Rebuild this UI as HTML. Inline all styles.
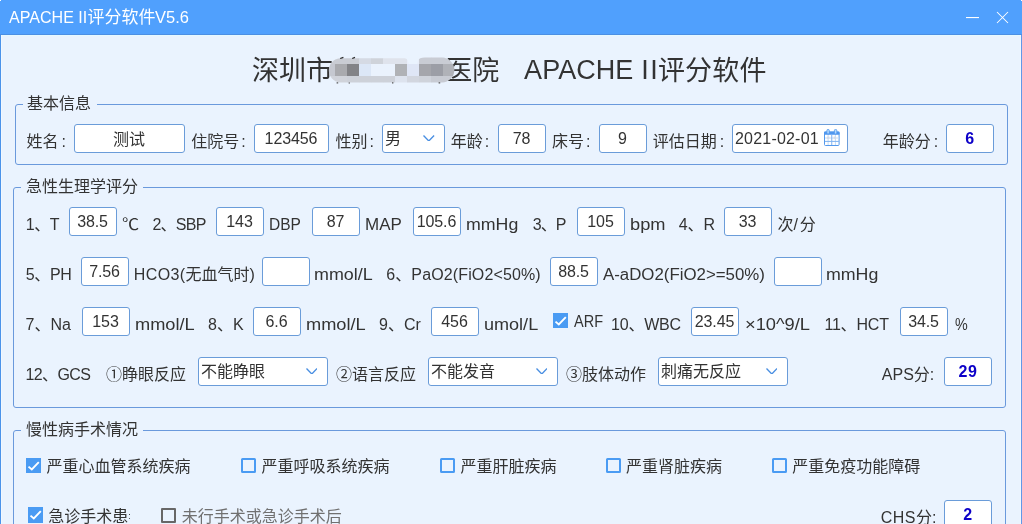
<!DOCTYPE html>
<html lang="zh-CN"><head><meta charset="utf-8"><title>APACHE II评分软件V5.6</title>
<style>
*{box-sizing:border-box;margin:0;padding:0}
html,body{width:1022px;height:524px;overflow:hidden;background:#eaf3fe}
body{font-family:"Liberation Sans","Noto Sans CJK SC",sans-serif;font-size:16px;color:#333;position:relative}
#win{will-change:transform;position:absolute;left:0;top:0;width:1022px;height:524px;overflow:hidden;background:#eaf3fe}
.bl{position:absolute;top:35px;width:1px;height:489px}
#tb{position:absolute;left:0;top:0;width:1022px;height:35px;background:#50a0fd;border-bottom:1px solid #4c8fe3}
#tb .t{position:absolute;top:7px;line-height:22px;color:#fff;font-size:17px;white-space:pre}
.abs{position:absolute}
.gb{position:absolute;border:1px solid #6a99dc;border-radius:3px}
.lg{position:absolute;line-height:22px;height:22px;background:#eaf3fe;white-space:nowrap;padding:0 5px}
.lb{position:absolute;line-height:22px;height:22px;white-space:pre}
.in{position:absolute;height:29px;border:1px solid #6a9cd9;border-radius:3px;background:#fff;text-align:center;line-height:28px;letter-spacing:-0.1px;padding-right:1px;white-space:pre;overflow:hidden}
.in.sc{color:#0c00c8;font-weight:bold;letter-spacing:0.5px;padding-right:0}
.sel{position:absolute;height:29px;border:1px solid #6a9cd9;border-radius:3px;background:#fff;line-height:27px;padding-left:2px;white-space:pre;overflow:hidden}
.chev{position:absolute;top:9.5px;width:11.6px;height:6.8px}
.cb{position:absolute;width:15.4px;height:15.4px}
.cb.on{background:#4a9bf3}
.cb.off{border:2px solid #4a9bf3;background:#eaf3fe;width:15px;height:15px;border-radius:1.5px}
.cb.dis{border:2px solid #676767;background:#eaf3fe;width:15px;height:15px;border-radius:1px}
.ttl{position:absolute;font-size:27px;line-height:36px;white-space:pre;color:#333}
</style></head><body><div id="win">
<div id="tb"><div class="t" id="tb1" style="left:9.20px;transform-origin:0 0;transform:scaleX(0.9450)">APACHE II</div><div class="t" id="tb2" style="left:87.50px">评分软件</div><div class="t" id="tb3" style="left:155.00px;transform-origin:0 0;transform:scaleX(0.9700)">V5.6</div><svg class="abs" style="left:966px;top:16px" width="14" height="3" viewBox="0 0 14 3"><rect x="0" y="1" width="13" height="1.1" fill="#fff"/></svg><svg class="abs" style="left:996px;top:11px" width="14" height="14" viewBox="0 0 14 14"><path d="M1 1 L12 12 M12 1 L1 12" stroke="#fff" stroke-width="1.05" fill="none"/></svg><div class="abs" style="left:0;top:0;width:2px;height:2px;background:radial-gradient(circle at 2px 2px,transparent 1.6px,#fff 2px)"></div><div class="abs" style="right:0;top:0;width:2px;height:2px;background:radial-gradient(circle at 0 2px,transparent 1.6px,#fff 2px)"></div></div>
<div class="ttl" id="t1" style="left:252px;top:53px">深圳市</div><div class="ttl" id="t2" style="left:445.3px;top:53px">医院</div><div class="ttl" id="t3" style="left:524.1px;top:53px"><span style="position:relative;top:-1.2px"><span style="letter-spacing:0.05px">APACHE</span><span style="letter-spacing:0.3px"> </span><span style="letter-spacing:1.6px">I</span>I</span><span style="letter-spacing:0.2px">评分软件</span></div>
<svg class="abs" style="left:327px;top:56px" width="130" height="30" viewBox="327 56 130 30">
<defs><clipPath id="cp"><path d="M339.8 58.3 H405 Q407 58.3 408 61 L409 64 H417 L418 60.5 Q419 57.6 425 57.6 H442 A12.4 12.4 0 0 1 442 82.4 H339.8 A12.1 12.1 0 0 1 339.8 58.3 Z"/></clipPath></defs>
<g clip-path="url(#cp)">
<rect x="323" y="52" width="12.2" height="12.2" fill="#c9ccd3"/><rect x="335" y="52" width="12.2" height="12.2" fill="#c9ccd3"/><rect x="347" y="52" width="12.2" height="12.2" fill="#c9ccd3"/><rect x="359" y="52" width="12.2" height="12.2" fill="#d5dae4"/><rect x="371" y="52" width="12.2" height="12.2" fill="#cfd3da"/><rect x="383" y="52" width="12.2" height="12.2" fill="#dfe3ec"/><rect x="395" y="52" width="12.2" height="12.2" fill="#dfe3ec"/><rect x="407" y="52" width="12.2" height="12.2" fill="#e8eefa"/><rect x="419" y="52" width="12.2" height="12.2" fill="#c9ccd4"/><rect x="431" y="52" width="12.2" height="12.2" fill="#c9ccd4"/><rect x="443" y="52" width="12.2" height="12.2" fill="#c9ccd4"/><rect x="323" y="64" width="12.2" height="12.2" fill="#c5c8d0"/><rect x="335" y="64" width="12.2" height="12.2" fill="#a9aaae"/><rect x="347" y="64" width="12.2" height="12.2" fill="#828387"/><rect x="359" y="64" width="12.2" height="12.2" fill="#dce7f7"/><rect x="371" y="64" width="12.2" height="12.2" fill="#eaf2fd"/><rect x="383" y="64" width="12.2" height="12.2" fill="#eaf2fd"/><rect x="395" y="64" width="12.2" height="12.2" fill="#b0b2b6"/><rect x="407" y="64" width="12.2" height="12.2" fill="#dfe6f6"/><rect x="419" y="64" width="12.2" height="12.2" fill="#a5a6ac"/><rect x="431" y="64" width="12.2" height="12.2" fill="#9c9ea6"/><rect x="443" y="64" width="12.2" height="12.2" fill="#b0b2b8"/><rect x="323" y="76" width="12.2" height="12.2" fill="#d0d3da"/><rect x="335" y="76" width="12.2" height="12.2" fill="#d0d3da"/><rect x="347" y="76" width="12.2" height="12.2" fill="#cdd1d9"/><rect x="359" y="76" width="12.2" height="12.2" fill="#cdd1d9"/><rect x="371" y="76" width="12.2" height="12.2" fill="#cdd1d9"/><rect x="383" y="76" width="12.2" height="12.2" fill="#cdd1d9"/><rect x="395" y="76" width="12.2" height="12.2" fill="#dde3ee"/><rect x="407" y="76" width="12.2" height="12.2" fill="#d2d6df"/><rect x="419" y="76" width="12.2" height="12.2" fill="#cfd3db"/><rect x="431" y="76" width="12.2" height="12.2" fill="#c8cbd3"/><rect x="443" y="76" width="12.2" height="12.2" fill="#c8cbd3"/></g><path d="M340.2 58.5 L343.4 57.3 M352.2 58.5 L355 57.3" stroke="#2a2a2a" stroke-width="1.3" fill="none"/><path d="M336.6 82.9 h1.6 M348.6 83 h1.4 M392 82.9 h1.4 M438.6 82.9 h1.6" stroke="#555" stroke-width="1.1" fill="none"/></svg>
<div class="gb" style="left:15px;top:104px;width:993px;height:61px"></div><div class="gb" style="left:13px;top:187px;width:993px;height:221px"></div><div class="gb" style="left:13px;top:430px;width:993px;height:120px"></div>
<div class="lg" id="lg1" style="left:23px;top:93px;padding:0 6px 0 4px">基本信息</div><div class="lg" id="lg2" style="left:21px;top:176px">急性生理学评分</div><div class="lg" id="lg3" style="left:21px;top:419px">慢性病手术情况</div>
<div class="lb" id="lb0" style="left:26.50px;top:130.5px"><span class="c">姓名</span><span class="l" style="letter-spacing:0.00px;margin-left:3.0px">:</span></div><div class="lb" id="lb1" style="left:191.20px;top:130.5px"><span class="c">住院号</span><span class="l" style="letter-spacing:0.00px;margin-left:2.0px">:</span></div><div class="lb" id="lb2" style="left:335.40px;top:130.5px"><span class="c">性别</span><span class="l" style="letter-spacing:0.00px;margin-left:2.0px">:</span></div><div class="lb" id="lb3" style="left:450.70px;top:130.5px"><span class="c">年龄</span><span class="l" style="letter-spacing:0.00px;margin-left:2.0px">:</span></div><div class="lb" id="lb4" style="left:552.00px;top:130.5px"><span class="c">床号</span><span class="l" style="letter-spacing:0.00px;margin-left:2.0px">:</span></div><div class="lb" id="lb5" style="left:652.70px;top:130.5px"><span class="c">评估日期</span><span class="l" style="letter-spacing:0.00px;margin-left:3.0px">:</span></div><div class="lb" id="lb6" style="left:882.80px;top:130.5px"><span class="c">年龄分</span><span class="l" style="letter-spacing:0.00px;margin-left:3.0px">:</span></div><div class="lb" id="lb7" style="left:25.80px;top:213.5px"><span class="l" style="letter-spacing:-0.50px">1</span><span class="c" style="letter-spacing:-0.50px">、</span><span class="l" style="letter-spacing:-0.50px">T</span></div><div class="lb" id="lb8" style="left:121.80px;top:213.5px;transform-origin:0 0;transform:scaleX(1.0714)">℃</div><div class="lb" id="lb9" style="left:152.40px;top:213.5px"><span class="l" style="letter-spacing:-0.75px">2</span><span class="c" style="letter-spacing:-0.75px">、</span><span class="l" style="letter-spacing:-0.75px">SBP</span></div><div class="lb" id="lb10" style="left:269.20px;top:213.5px;transform-origin:0 0;transform:scaleX(0.9702)">DBP</div><div class="lb" id="lb11" style="left:365.20px;top:213.5px;transform-origin:0 0;transform:scaleX(1.0614)">MAP</div><div class="lb" id="lb12" style="left:466.20px;top:213.5px;transform-origin:0 0;transform:scaleX(1.1093)">mmHg</div><div class="lb" id="lb13" style="left:532.80px;top:213.5px"><span class="l" style="letter-spacing:-1.00px">3</span><span class="c" style="letter-spacing:-1.00px">、</span><span class="l" style="letter-spacing:-1.00px">P</span></div><div class="lb" id="lb14" style="left:630.00px;top:213.5px;transform-origin:0 0;transform:scaleX(1.1390)">bpm</div><div class="lb" id="lb15" style="left:678.70px;top:213.5px"><span class="l" style="letter-spacing:-0.00px">4</span><span class="c">、</span><span class="l" style="letter-spacing:-0.00px">R</span></div><div class="lb" id="lb16" style="left:777.40px;top:213.5px"><span class="c">次</span><span class="l" style="letter-spacing:2.00px">/</span><span class="c">分</span></div><div class="lb" id="lb17" style="left:25.80px;top:263.5px"><span class="l" style="letter-spacing:-0.35px">5</span><span class="c" style="letter-spacing:-0.35px">、</span><span class="l" style="letter-spacing:-0.35px">PH</span></div><div class="lb" id="lb18" style="left:133.80px;top:263.5px"><span class="l" style="letter-spacing:0.40px">HCO3(</span><span class="c">无血气时</span><span class="l" style="letter-spacing:0.40px">)</span></div><div class="lb" id="lb19" style="left:314.30px;top:263.5px;transform-origin:0 0;transform:scaleX(1.1180)">mmol/L</div><div class="lb" id="lb20" style="left:386.20px;top:263.5px"><span class="l" style="letter-spacing:0.13px">6</span><span class="c" style="letter-spacing:0.13px">、</span><span class="l" style="letter-spacing:0.13px">PaO2(FiO2&lt;50%)</span></div><div class="lb" id="lb21" style="left:603.00px;top:263.5px;transform-origin:0 0;transform:scaleX(1.0523)">A-aDO2(FiO2&gt;=50%)</div><div class="lb" id="lb22" style="left:826.10px;top:263.5px;transform-origin:0 0;transform:scaleX(1.1113)">mmHg</div><div class="lb" id="lb23" style="left:25.50px;top:313.5px"><span class="l" style="letter-spacing:-0.02px">7</span><span class="c" style="letter-spacing:-0.02px">、</span><span class="l" style="letter-spacing:-0.02px">Na</span></div><div class="lb" id="lb24" style="left:135.10px;top:313.5px;transform-origin:0 0;transform:scaleX(1.1377)">mmol/L</div><div class="lb" id="lb25" style="left:208.00px;top:313.5px"><span class="l" style="letter-spacing:-0.00px">8</span><span class="c">、</span><span class="l" style="letter-spacing:-0.00px">K</span></div><div class="lb" id="lb26" style="left:306.20px;top:313.5px;transform-origin:0 0;transform:scaleX(1.1377)">mmol/L</div><div class="lb" id="lb27" style="left:379.10px;top:313.5px"><span class="l" style="letter-spacing:0.01px">9</span><span class="c" style="letter-spacing:0.01px">、</span><span class="l" style="letter-spacing:0.01px">Cr</span></div><div class="lb" id="lb28" style="left:484.20px;top:313.5px;transform-origin:0 0;transform:scaleX(1.1280)">umol/L</div><div class="lb" id="lb29" style="left:611.00px;top:313.5px"><span class="l" style="letter-spacing:-0.20px">10</span><span class="c" style="letter-spacing:-0.20px">、</span><span class="l" style="letter-spacing:-0.20px">WBC</span></div><div class="lb" id="lb30" style="left:745.10px;top:313.5px;transform-origin:0 0;transform:scaleX(1.1429)">×10^9/L</div><div class="lb" id="lb31" style="left:824.40px;top:313.5px"><span class="l" style="letter-spacing:-0.20px">11</span><span class="c" style="letter-spacing:-0.20px">、</span><span class="l" style="letter-spacing:-0.20px">HCT</span></div><div class="lb" id="lb32" style="left:954.70px;top:313.5px;transform-origin:0 0;transform:scaleX(0.8943)">%</div><div class="lb" id="lb33" style="left:25.50px;top:363.5px"><span class="l" style="letter-spacing:-0.60px">12</span><span class="c" style="letter-spacing:-0.60px">、</span><span class="l" style="letter-spacing:-0.60px">GCS</span></div><div class="lb" id="lb34" style="left:106.00px;top:363.5px"><span class="c">①睁眼反应</span></div><div class="lb" id="lb35" style="left:336.10px;top:363.5px"><span class="c">②语言反应</span></div><div class="lb" id="lb36" style="left:566.10px;top:363.5px"><span class="c">③肢体动作</span></div><div class="lb" id="lb37" style="left:881.80px;top:363.5px"><span class="l" style="letter-spacing:0.00px">APS</span><span class="c">分</span><span class="l" style="letter-spacing:0.00px">:</span></div><div class="lb" id="lb38" style="left:573.50px;top:310.8px;transform-origin:0 0;transform:scaleX(0.9062)">ARF</div><div class="lb" id="lb39" style="left:880.70px;top:506.5px"><span class="l" style="letter-spacing:0.47px">CHS</span><span class="c">分</span><span class="l" style="letter-spacing:0.47px">:</span></div>
<div class="in " style="left:74px;top:124px;width:111px;line-height:29px">测试</div><div class="in " style="left:254px;top:124px;width:75px">123456</div><div class="in " style="left:498px;top:124px;width:48px">78</div><div class="in " style="left:599px;top:124px;width:48px">9</div><div class="in sc" style="left:946px;top:124px;width:48px">6</div><div class="in " style="left:69px;top:207px;width:48px">38.5</div><div class="in " style="left:216px;top:207px;width:48px">143</div><div class="in " style="left:312px;top:207px;width:48px">87</div><div class="in " style="left:413px;top:207px;width:48px">105.6</div><div class="in " style="left:577px;top:207px;width:48px">105</div><div class="in " style="left:724px;top:207px;width:48px">33</div><div class="in " style="left:81px;top:257px;width:48px">7.56</div><div class="in " style="left:262px;top:257px;width:48px"></div><div class="in " style="left:550px;top:257px;width:48px">88.5</div><div class="in " style="left:774px;top:257px;width:48px"></div><div class="in " style="left:82px;top:307px;width:48px">153</div><div class="in " style="left:253px;top:307px;width:48px">6.6</div><div class="in " style="left:431px;top:307px;width:48px">456</div><div class="in " style="left:691px;top:307px;width:48px">23.45</div><div class="in " style="left:900px;top:307px;width:48px">34.5</div><div class="in sc" style="left:944px;top:357px;width:48px">29</div><div class="in sc" style="left:944px;top:500px;width:48px">2</div>
<div class="sel" style="left:382px;top:124px;width:63px">男<svg class="chev" style="left:40.0px" viewBox="0 0 11.6 6.8"><path d="M0.5 0.5 L5.8 6 L11.1 0.5" stroke="#4a8fe2" stroke-width="1.35" fill="none"/></svg></div><div class="sel" style="left:198px;top:357px;width:130px">不能睁眼<svg class="chev" style="left:106.7px" viewBox="0 0 11.6 6.8"><path d="M0.5 0.5 L5.8 6 L11.1 0.5" stroke="#4a8fe2" stroke-width="1.35" fill="none"/></svg></div><div class="sel" style="left:428px;top:357px;width:130px">不能发音<svg class="chev" style="left:106.8px" viewBox="0 0 11.6 6.8"><path d="M0.5 0.5 L5.8 6 L11.1 0.5" stroke="#4a8fe2" stroke-width="1.35" fill="none"/></svg></div><div class="sel" style="left:658px;top:357px;width:130px">刺痛无反应<svg class="chev" style="left:106.9px" viewBox="0 0 11.6 6.8"><path d="M0.5 0.5 L5.8 6 L11.1 0.5" stroke="#4a8fe2" stroke-width="1.35" fill="none"/></svg></div>
<div class="sel" style="left:732px;top:124px;width:116px;padding-left:2px"><span id="dt" style="letter-spacing:0.2px;position:relative;top:0.2px">2021-02-01</span><svg class="abs" style="left:91px;top:4px" width="16" height="17" viewBox="0 0 16 17"><rect x="0.5" y="3.1" width="14.6" height="13.4" rx="1" fill="#fff" stroke="#5499ec" stroke-width="1"/><path d="M4.1 6 V16 M11.4 6 V16 M1 9 H15" stroke="#c3dcf8" stroke-width="1" fill="none"/><path d="M7.75 6 V16 M1 12.4 H15" stroke="#7fb2f0" stroke-width="1" fill="none"/><rect x="3" y="7.6" width="2.4" height="2.2" fill="#d5dae6"/><rect x="9.6" y="7.6" width="2.4" height="2.2" fill="#d5dae6"/><rect x="0" y="2.6" width="15.6" height="3.2" rx="0.8" fill="#4f97ef"/><rect x="2.9" y="0.4" width="2.4" height="4.6" rx="1.1" fill="#b4d9fc" stroke="#4f97ef" stroke-width="0.8"/><rect x="10.4" y="0.4" width="2.4" height="4.6" rx="1.1" fill="#b4d9fc" stroke="#4f97ef" stroke-width="0.8"/></svg></div>
<div class="cb on" style="left:552.8px;top:312.6px"><svg width="16" height="16" viewBox="0 0 16 16" style="position:absolute;left:0;top:0"><path d="M2.5 8.6 L5.8 11.5 L12.8 4.2" stroke="#fff" stroke-width="1.9" fill="none"/></svg></div><div class="cb on" style="left:25.7px;top:457.6px"><svg width="16" height="16" viewBox="0 0 16 16" style="position:absolute;left:0;top:0"><path d="M2.5 8.6 L5.8 11.5 L12.8 4.2" stroke="#fff" stroke-width="1.9" fill="none"/></svg></div><div class="lb" style="left:46.5px;top:456.3px">严重心血管系统疾病</div><div class="cb off" style="left:241.0px;top:458.0px"></div><div class="lb" style="left:261.5px;top:456.3px">严重呼吸系统疾病</div><div class="cb off" style="left:440.0px;top:458.0px"></div><div class="lb" style="left:460.6px;top:456.3px">严重肝脏疾病</div><div class="cb off" style="left:606.0px;top:458.0px"></div><div class="lb" style="left:626px;top:456.3px">严重肾脏疾病</div><div class="cb off" style="left:772.0px;top:458.0px"></div><div class="lb" style="left:792.2px;top:456.3px">严重免疫功能障碍</div><div class="cb on" style="left:27.8px;top:507.4px"><svg width="16" height="16" viewBox="0 0 16 16" style="position:absolute;left:0;top:0"><path d="M2.5 8.6 L5.8 11.5 L12.8 4.2" stroke="#fff" stroke-width="1.9" fill="none"/></svg></div><div class="lb" style="left:48.3px;top:506px;width:81.6px;overflow:hidden">急诊手术患者</div><div class="cb dis" style="left:161.2px;top:508.1px"></div><div class="lb" style="left:181.8px;top:506.3px;color:#707070">未行手术或急诊手术后</div><div class="abs" style="left:0;top:35px;width:1022px;height:1px;background:#e6f9ff"></div><div class="bl" style="left:1px;background:#f1f8ff"></div><div class="bl" style="left:1020px;background:#f1f8ff"></div><div class="bl" style="left:0;background:#4b93ea"></div><div class="bl" style="left:1021px;background:#6098e8"></div>
</div></body></html>
